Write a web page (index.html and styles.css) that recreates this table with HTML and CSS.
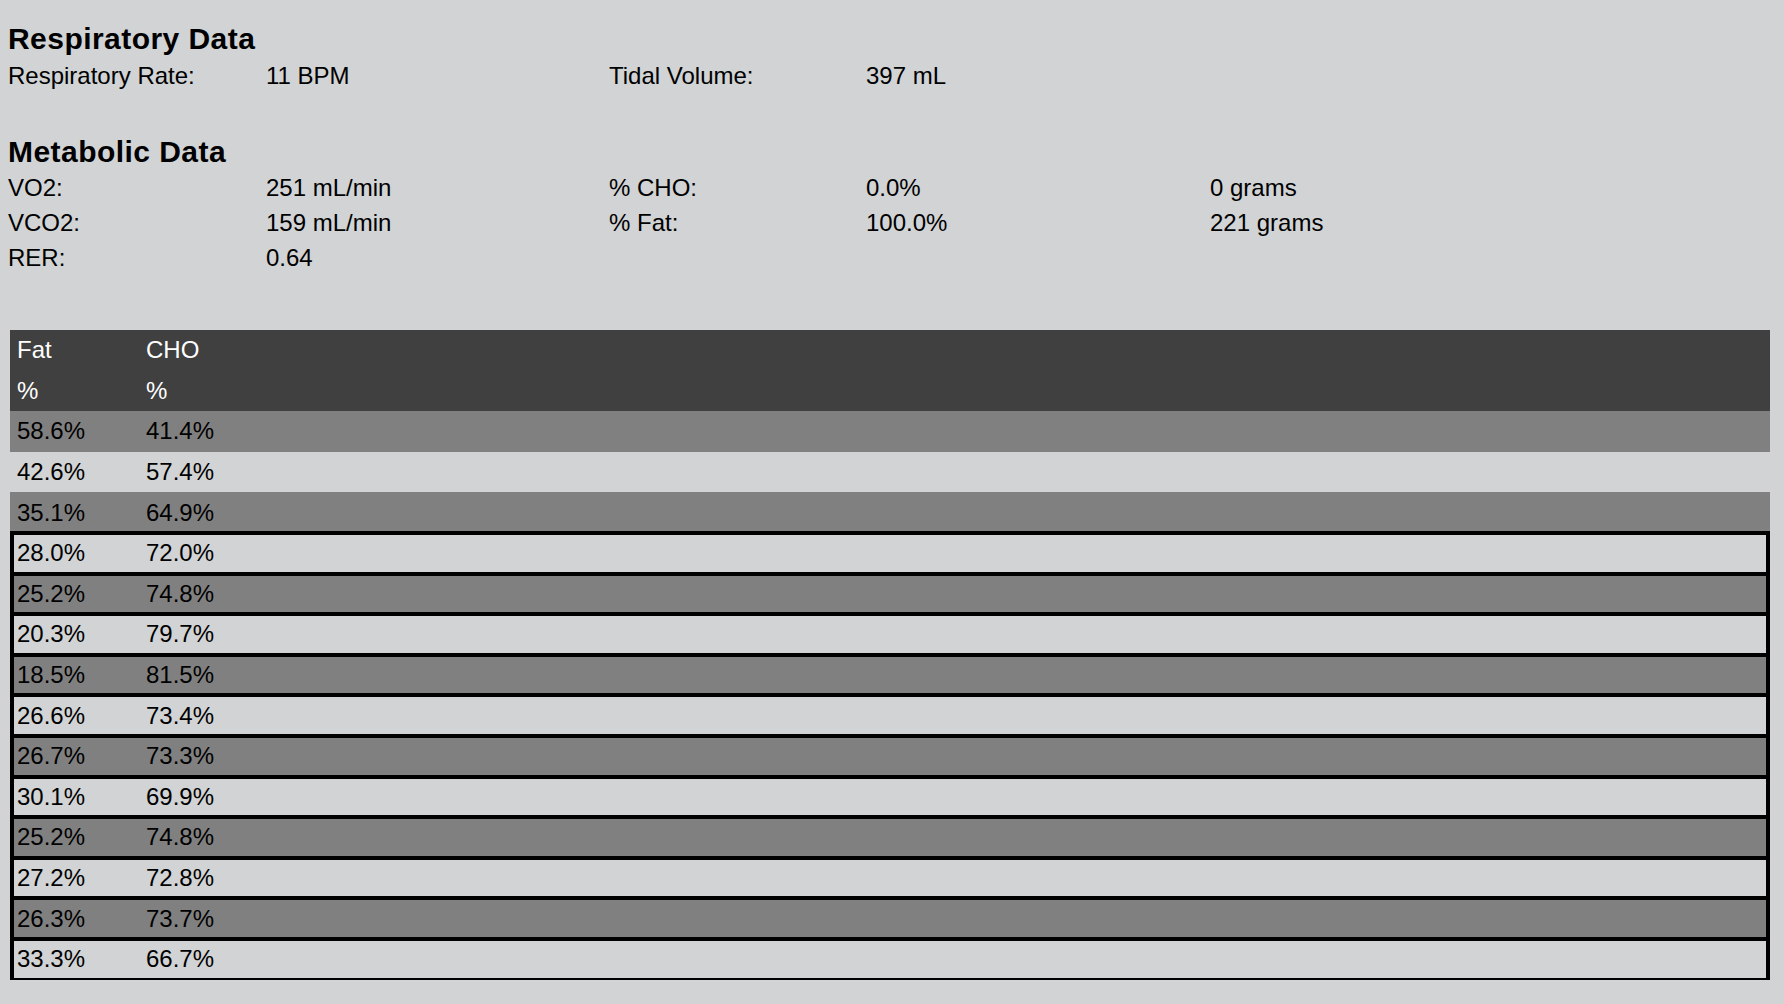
FILE: index.html
```html
<!DOCTYPE html>
<html>
<head>
<meta charset="utf-8">
<title>Respiratory and Metabolic Data</title>
<link rel="stylesheet" href="styles.css">
</head>
<body>
<div class="page">
  <h1 class="heading">Respiratory Data</h1>
  <div class="info info-resp">
    <span>Respiratory Rate:</span><span>11 BPM</span><span>Tidal Volume:</span><span>397 mL</span>
  </div>

  <h2 class="heading heading-meta">Metabolic Data</h2>
  <div class="info info-meta">
    <span>VO2:</span><span>251 mL/min</span><span>% CHO:</span><span>0.0%</span><span>0 grams</span><span></span>
    <span>VCO2:</span><span>159 mL/min</span><span>% Fat:</span><span>100.0%</span><span>221 grams</span><span></span>
    <span>RER:</span><span>0.64</span><span></span><span></span><span></span><span></span>
  </div>

  <div class="data">
    <div class="row head"><span>Fat</span><span>CHO</span></div>
    <div class="row head"><span>%</span><span>%</span></div>
    <div class="row dark"><span>58.6%</span><span>41.4%</span></div>
    <div class="row light"><span>42.6%</span><span>57.4%</span></div>
    <div class="row dark"><span>35.1%</span><span>64.9%</span></div>
    <div class="row light boxed"><span>28.0%</span><span>72.0%</span></div>
    <div class="row dark boxed"><span>25.2%</span><span>74.8%</span></div>
    <div class="row light boxed"><span>20.3%</span><span>79.7%</span></div>
    <div class="row dark boxed"><span>18.5%</span><span>81.5%</span></div>
    <div class="row light boxed"><span>26.6%</span><span>73.4%</span></div>
    <div class="row dark boxed"><span>26.7%</span><span>73.3%</span></div>
    <div class="row light boxed"><span>30.1%</span><span>69.9%</span></div>
    <div class="row dark boxed"><span>25.2%</span><span>74.8%</span></div>
    <div class="row light boxed"><span>27.2%</span><span>72.8%</span></div>
    <div class="row dark boxed"><span>26.3%</span><span>73.7%</span></div>
    <div class="row light boxed last"><span>33.3%</span><span>66.7%</span></div>
  </div>
</div>
</body>
</html>
```
FILE: styles.css
```css
html, body {
  margin: 0;
  padding: 0;
  background: #d1d3d4;
}

body {
  font-family: "Liberation Sans", Arial, sans-serif;
  font-size: 24px;
  color: #000;
}

.page {
  padding: 20px 0 0 8px;
}

.heading {
  margin: 0;
  font-size: 30px;
  line-height: 37px;
  font-weight: bold;
  letter-spacing: 0.45px;
}

.heading-meta {
  margin-top: 40px;
}

.info {
  display: grid;
  grid-template-columns: 258px 343px 257px 344px 257px 344px;
  line-height: 35px;
}

.info-resp {
  margin-top: 1px;
}

.data {
  margin-top: 55px;
  margin-left: 2px;
  width: 1760px;
}

.row {
  display: grid;
  grid-template-columns: 129px 1fr;
  align-items: center;
  height: 40.6px;
}

.row span {
  padding: 0 7px;
}

.head {
  background: #404040;
  color: #fff;
}

.dark {
  background: #808080;
}

.light {
  background: #d1d3d4;
}

.boxed {
  box-shadow:
    0 -2px 0 #000,
    inset 0 2px 0 #000,
    inset 4px 0 0 #000,
    inset -4px 0 0 #000;
}

.boxed.last {
  box-shadow:
    0 -2px 0 #000,
    0 2px 0 #000,
    inset 0 2px 0 #000,
    inset 0 -2px 0 #000,
    inset 4px 0 0 #000,
    inset -4px 0 0 #000;
}
```
